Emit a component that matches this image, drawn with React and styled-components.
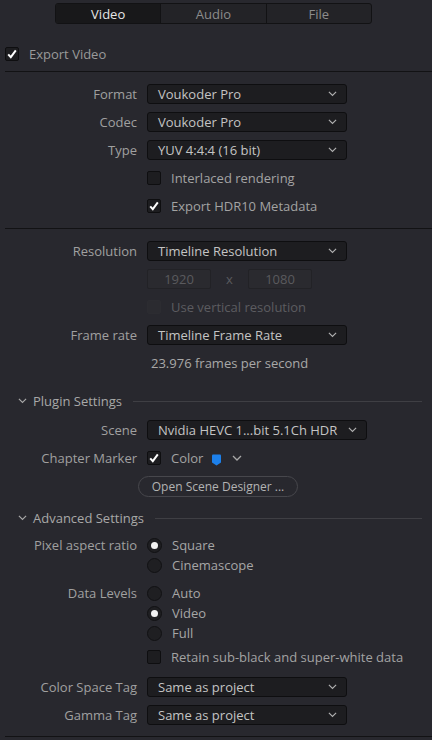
import React from 'react';
import styled, {createGlobalStyle} from 'styled-components';

const GlobalStyle = createGlobalStyle`
  html, body {
    margin: 0;
    background: #28282e;
  }
  body {
    font-family: 'Open Sans', 'Liberation Sans', sans-serif;
    font-size: 13px;
    color: #a3a3a3;
  }
`;

const Chevron = ({size = 10, color = '#a8a8a8'}) => (
  <svg width={size} height={size * 0.6} viewBox='0 0 10 6'>
    <path d='M1 1 L5 5 L9 1' fill='none' stroke={color} strokeWidth='1.3' />
  </svg>
);

const Tick = () => (
  <svg width='12' height='12' viewBox='0 0 12 12'>
    <path d='M2.2 6.4 L4.8 9.2 L9.8 2.4' fill='none' stroke='#fff' strokeWidth='2' />
  </svg>
);

const App = () => {
  return (
    <Page>
      <GlobalStyle />
      <Tabs>
        <Tab $active>Video</Tab>
        <Tab>Audio</Tab>
        <Tab>File</Tab>
      </Tabs>

      <ExportRow>
        <Check $on>
          <Tick />
        </Check>
        <span>Export Video</span>
      </ExportRow>
      <Divider $mt={7} />

      <Section>
        <Row>
          <Label>Format</Label>
          <Select>Voukoder Pro</Select>
        </Row>
        <Row>
          <Label>Codec</Label>
          <Select>Voukoder Pro</Select>
        </Row>
        <Row>
          <Label>Type</Label>
          <Select>YUV 4:4:4 (16 bit)</Select>
        </Row>
        <Row>
          <Label />
          <Check />
          <CheckText>Interlaced rendering</CheckText>
        </Row>
        <Row>
          <Label />
          <Check $on>
            <Tick />
          </Check>
          <CheckText>Export HDR10 Metadata</CheckText>
        </Row>
      </Section>
      <Divider />

      <Section>
        <Row>
          <Label>Resolution</Label>
          <Select>Timeline Resolution</Select>
        </Row>
        <Row>
          <Label />
          <NumBox>1920</NumBox>
          <Times>x</Times>
          <NumBox>1080</NumBox>
        </Row>
        <Row>
          <Label />
          <Check $disabled />
          <CheckText $disabled>Use vertical resolution</CheckText>
        </Row>
        <Row>
          <Label>Frame rate</Label>
          <Select>Timeline Frame Rate</Select>
        </Row>
        <Row>
          <Label />
          <Info>23.976 frames per second</Info>
        </Row>
      </Section>

      <Header $top={6}>
        <Chevron size={9} />
        <span>Plugin Settings</span>
        <HeaderLine />
      </Header>
      <Section $pad={0}>
        <Row $mt={9}>
          <Label>Scene</Label>
          <Select $w={220}>Nvidia HEVC 1...bit 5.1Ch HDR</Select>
        </Row>
        <Row>
          <Label>Chapter Marker</Label>
          <Check $on>
            <Tick />
          </Check>
          <CheckText>Color</CheckText>
          <Marker>
            <svg width='11' height='12' viewBox='0 0 11 12'>
              <path d='M1 1.5 Q1 0.5 2 0.5 L9 0.5 Q10 0.5 10 1.5 L10 8.5 L5.5 11.5 L1 8.5 Z' fill='#1d80ea' />
            </svg>
          </Marker>
          <Chevron size={10} />
        </Row>
        <Row $h={21}>
          <Label $w={128} />
          <PillButton>Open Scene Designer ...</PillButton>
        </Row>
      </Section>

      <Header $top={11}>
        <Chevron size={9} />
        <span>Advanced Settings</span>
        <HeaderLine />
      </Header>
      <Section $pad={0}>
        <Row $mt={7}>
          <Label>Pixel aspect ratio</Label>
          <Radio $on />
          <RadioText>Square</RadioText>
        </Row>
        <Row $mt={0}>
          <Label />
          <Radio />
          <RadioText>Cinemascope</RadioText>
        </Row>
        <Row $mt={8}>
          <Label>Data Levels</Label>
          <Radio />
          <RadioText>Auto</RadioText>
        </Row>
        <Row $mt={0}>
          <Label />
          <Radio $on />
          <RadioText>Video</RadioText>
        </Row>
        <Row $mt={0}>
          <Label />
          <Radio />
          <RadioText>Full</RadioText>
        </Row>
        <Row $mt={4}>
          <Label />
          <Check />
          <CheckText>Retain sub-black and super-white data</CheckText>
        </Row>
        <Row $mt={10}>
          <Label>Color Space Tag</Label>
          <Select>Same as project</Select>
        </Row>
        <Row>
          <Label>Gamma Tag</Label>
          <Select>Same as project</Select>
        </Row>
      </Section>
      <Divider $mt={11} />
    </Page>
  );
};

const Page = styled.div`
  width: 432px;
  height: 740px;
  overflow: hidden;
  padding-top: 3px;
  box-sizing: border-box;
`;

const Tabs = styled.div`
  display: flex;
  margin-left: 55px;
  width: 317px;
  height: 21px;
  border: 1px solid #121214;
  border-radius: 3px;
  box-sizing: border-box;
  overflow: hidden;
  background: #232327;
`;

const Tab = styled.div`
  flex: 1;
  display: flex;
  align-items: center;
  justify-content: center;
  font-size: 13px;
  color: ${(p) => (p.$active ? '#e6e6e6' : '#8c8c8c')};
  background: ${(p) => (p.$active ? '#18181a' : 'transparent')};
  & + & {
    border-left: 1px solid #121214;
  }
`;

const ExportRow = styled.div`
  display: flex;
  align-items: center;
  gap: 10px;
  height: 20px;
  margin: 20px 0 0 5px;
  color: #9a9a9a;
`;

const Divider = styled.div`
  height: 1px;
  margin: ${(p) => p.$mt || 0}px 0 0 5px;
  background: #121214;
`;

const Section = styled.div`
  display: flex;
  flex-direction: column;
  padding: ${(p) => (p.$pad === undefined ? 12 : p.$pad)}px 0;
`;

const Row = styled.div`
  display: flex;
  align-items: center;
  height: ${(p) => p.$h || 20}px;
  margin-top: ${(p) => (p.$mt === undefined ? 8 : p.$mt)}px;
  &:first-child {
    margin-top: ${(p) => p.$mt || 0}px;
  }
`;

const Label = styled.div`
  width: ${(p) => p.$w || 137}px;
  margin-right: 10px;
  flex-shrink: 0;
  text-align: right;
  color: #a0a0a0;
  white-space: nowrap;
`;

const SelectBox = styled.div`
  display: flex;
  align-items: center;
  justify-content: space-between;
  width: ${(p) => p.$w || 200}px;
  height: 20px;
  box-sizing: border-box;
  padding: 0 9px 0 10px;
  background: #1d1d20;
  border: 1px solid #0e0e10;
  border-radius: 3px;
  color: #c4c4c4;
  white-space: nowrap;
`;

const Select = ({children, $w}) => (
  <SelectBox $w={$w}>
    <span>{children}</span>
    <Chevron size={9} color='#b0b0b0' />
  </SelectBox>
);

const Check = styled.div`
  width: 14px;
  height: 14px;
  box-sizing: border-box;
  border: 1px solid ${(p) => (p.$disabled ? '#2c2c31' : '#0e0e10')};
  border-radius: 2px;
  background: ${(p) => (p.$disabled ? '#2b2b30' : '#1d1d20')};
  display: flex;
  align-items: center;
  justify-content: center;
  flex-shrink: 0;
`;

const CheckText = styled.span`
  margin-left: 10px;
  color: ${(p) => (p.$disabled ? '#5c5c60' : '#a3a3a3')};
  white-space: nowrap;
`;

const NumBox = styled.div`
  width: 64px;
  height: 20px;
  box-sizing: border-box;
  border: 1px solid #222226;
  border-radius: 2px;
  background: #2a2a2f;
  color: #5a5a5e;
  display: flex;
  align-items: center;
  justify-content: center;
`;

const Times = styled.span`
  width: 37px;
  text-align: center;
  color: #5a5a5e;
`;

const Info = styled.span`
  margin-left: 4px;
  color: #a8a8a8;
`;

const Header = styled.div`
  display: flex;
  align-items: center;
  height: 20px;
  margin-top: ${(p) => p.$top}px;
  padding: 0 10px 0 18px;
  color: #a8a8a8;
  svg {
    margin-right: 6px;
  }
`;

const HeaderLine = styled.div`
  flex: 1;
  height: 1px;
  background: #3f3f44;
  margin-left: 11px;
`;

const Marker = styled.span`
  display: flex;
  margin: 3px 10px 0 8px;
`;

const PillButton = styled.div`
  width: 160px;
  height: 21px;
  box-sizing: border-box;
  border: 1px solid #47474c;
  border-radius: 11px;
  display: flex;
  align-items: center;
  justify-content: center;
  font-size: 12px;
  color: #b3b3b3;
  white-space: nowrap;
`;

const Radio = styled.div`
  width: 15px;
  height: 15px;
  box-sizing: border-box;
  border-radius: 50%;
  border: 1px solid #111113;
  background: #1f1f22;
  display: flex;
  align-items: center;
  justify-content: center;
  flex-shrink: 0;
  &::after {
    content: '';
    display: ${(p) => (p.$on ? 'block' : 'none')};
    width: 7px;
    height: 7px;
    border-radius: 50%;
    background: #f2f2f2;
  }
`;

const RadioText = styled.span`
  margin-left: 10px;
  color: #a6a6a6;
`;

export default App;
